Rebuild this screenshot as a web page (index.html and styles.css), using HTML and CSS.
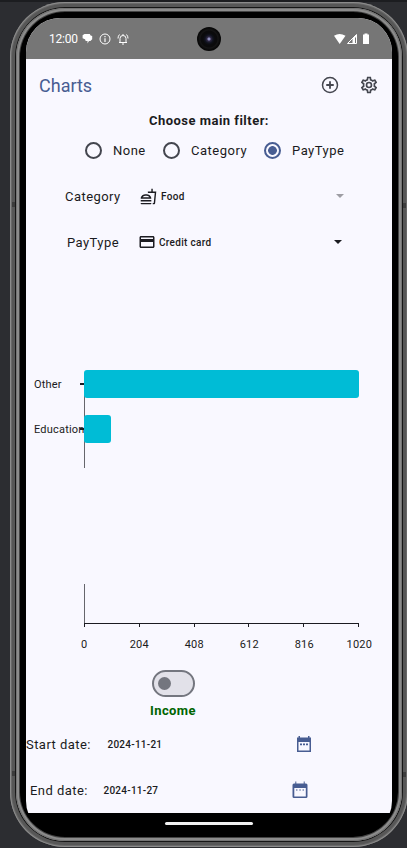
FILE: index.html
```html
<!DOCTYPE html>
<html lang="en">
<head>
<meta charset="utf-8">
<title>Charts</title>
<link rel="stylesheet" href="styles.css">
</head>
<body>
<div class="phone">
  <i class="antenna left upper"></i><i class="antenna left lower"></i>
  <i class="antenna right upper"></i><i class="antenna right lower"></i>
  <div class="ring"><div class="bezel">
  <div class="screen">
    <header class="status">
      <span class="clock">12:00</span>
      <svg class="s-chat" width="11" height="11" viewBox="0 0 11 11"><path d="M2.500 1h5.300l.8 1.500 1.600.4v3.300L8.400 8H7L5.500 10.500V8H3.700L3 6.300.6 5.300V2.300z" fill="#fff"/></svg>
      <svg class="s-info" width="12" height="12" viewBox="0 0 12 12"><circle cx="6" cy="6" r="5" fill="none" stroke="#fff"/><path d="M6 5.300V9M6 3v1.300" stroke="#fff" stroke-width="1.200"/></svg>
      <svg class="s-bell" width="12" height="12" viewBox="0 0 12 12"><path d="M2 9.500h8M3 9V5.500a3 3 0 0 1 6 0V9M6 1v1.500M5 11h2M1 5.500Q1 3 2.500 1.500M11 5.500Q11 3 9.500 1.500" fill="none" stroke="#fff"/></svg>
      <span class="camera"></span>
      <svg class="s-net" width="36" height="12" viewBox="0 0 36 12"><path d="M0 2.800Q5.500-1 11.500 2.800L5.700 11z" fill="#fff"/><path d="M22.500 1.500v9h-9z" fill="none" stroke="#fff"/><path d="M18.500 5.500l4-4v3h-1.500v6h-2.500z" fill="#fff"/><path d="M29 1.500h1.500V.5h3v1H35V11h-6z" fill="#fff"/></svg>
    </header>
    <nav class="appbar">
      <h1>Charts</h1>
      <svg width="18" height="18" viewBox="0 0 24 24"><circle cx="12" cy="12" r="10" fill="none" stroke="#44464f" stroke-width="2"/><path d="M12 7v10M7 12h10" stroke="#44464f" stroke-width="2.400"/></svg>
      <svg class="gear" width="20" height="20" viewBox="0 0 24 24"><path fill="#44464f" d="M19.430 12.980c.04-.32.070-.64.070-.98s-.03-.66-.07-.98l2.110-1.650c.19-.15.240-.42.120-.64l-2-3.460c-.09-.16-.26-.25-.44-.25-.06 0-.12.010-.17.030l-2.490 1c-.52-.4-1.080-.73-1.690-.98l-.38-2.650C14.460 2.180 14.250 2 14 2h-4c-.25 0-.46.180-.49.420l-.38 2.650c-.61.250-1.170.59-1.690.98l-2.490-1c-.06-.02-.12-.03-.18-.03-.17 0-.34.090-.43.250l-2 3.460c-.13.220-.07.490.12.640l2.110 1.650c-.04.32-.07.65-.07.980s.03.66.070.98l-2.110 1.650c-.19.150-.24.42-.12.640l2 3.460c.09.160.26.250.44.250.06 0 .12-.01.170-.03l2.490-1c.52.400 1.080.73 1.690.98l.38 2.650c.03.24.24.42.49.42h4c.25 0 .46-.18.49-.42l.38-2.650c.61-.25 1.170-.59 1.690-.98l2.490 1c.06.020.12.030.18.030.17 0 .34-.09.43-.25l2-3.460c.12-.22.070-.49-.12-.64zm-1.980-1.710c.04.31.050.52.050.73s-.02.43-.05.730l-.14 1.130.89.700 1.080.84-.7 1.210-1.270-.51-1.040-.42-.9.680c-.43.32-.84.56-1.250.73l-1.060.43-.16 1.130-.2 1.350h-1.400l-.19-1.350-.16-1.130-1.060-.43c-.43-.18-.83-.41-1.230-.71l-.91-.7-1.060.43-1.270.51-.7-1.210 1.080-.84.89-.7-.14-1.130c-.03-.31-.05-.54-.05-.74s.02-.43.050-.73l.14-1.130-.89-.7-1.080-.84.7-1.210 1.270.51 1.040.42.9-.68c.43-.32.84-.56 1.250-.73l1.060-.43.160-1.130.2-1.350h1.390l.19 1.350.16 1.130 1.060.43c.43.180.83.410 1.230.71l.91.700 1.060-.43 1.270-.51.7 1.210-1.070.85-.89.700zM12 8a4 4 0 1 0 0 8 4 4 0 0 0 0-8zm0 6a2 2 0 1 1 0-4 2 2 0 0 1 0 4z"/></svg>
    </nav>
    <h2>Choose main filter:</h2>
    <div class="radios">
      <i class="radio"></i><span>None</span>
      <i class="radio"></i><span>Category</span>
      <i class="radio on"></i><span>PayType</span>
    </div>
    <div class="select category">
      <span class="name">Category</span>
      <svg width="17" height="17" viewBox="0 0 24 24"><path fill="#1b1b21" d="M1 21.980c0 .56.450 1.020 1.010 1.020H15c.56 0 1.010-.45 1.010-1.010V21H1zM8.500 8.990C4.750 8.990 1 11 1 15h15c0-4-3.750-6.010-7.500-6.010zM3.620 13c1.110-1.550 3.470-2.010 4.880-2.010s3.770.46 4.880 2.010zM1 17h15v2H1zM18 5V1h-2v4h-5l.23 2h9.560l-1.400 14H18v2h1.720c.84 0 1.530-.65 1.630-1.470L23 5z"/></svg>
      <span class="value">Food</span><i class="caret"></i>
    </div>
    <div class="select paytype">
      <span class="name">PayType</span>
      <svg width="18" height="18" viewBox="0 0 24 24"><path fill="#1b1b21" d="M20 4H4c-1.110 0-1.990.89-1.990 2L2 18c0 1.110.89 2 2 2h16c1.110 0 2-.89 2-2V6c0-1.110-.89-2-2-2zm0 14H4v-6h16zm0-10H4V6h16z"/></svg>
      <span class="value">Credit card</span><i class="caret"></i>
    </div>
    <section class="chart">
      <div class="bars">
        <div class="bar-row"><span>Other</span><i class="mark"></i><b class="bar full"></b></div>
        <div class="bar-row"><span>Education</span><i class="mark"></i><b class="bar small"></b></div>
      </div>
      <div class="axis"><i></i><i></i><i></i><i></i><i></i><i></i></div>
      <div class="ticks"><span>0</span><span>204</span><span>408</span><span>612</span><span>816</span><span>1020</span></div>
    </section>
    <div class="switch"><i></i></div>
    <div class="income">Income</div>
    <div class="date start">
      <span class="name">Start date:</span><span class="value">2024-11-21</span>
      <svg width="18" height="18" viewBox="0 0 18 18"><path fill="#485d92" d="M3.500 1H5v1.500h8V1h1.500v1.500H16V17H2V2.500h1.500zM3.500 7v8.500h11V7z"/><path fill="#485d92" d="M5 8.500h2v1.800H5zM8 8.500h2v1.800H8zM11 8.500h2v1.800h-2z"/></svg>
    </div>
    <div class="date end">
      <span class="name">End date:</span><span class="value">2024-11-27</span>
      <svg width="18" height="18" viewBox="0 0 18 18"><path fill="#485d92" d="M4.300.5h1v2h7.400v-2h1v2H15q1.500 0 1.500 1.500v11.500Q16.500 17 15 17H3q-1.500 0-1.500-1.500V4Q1.500 2.500 3 2.500h1.300zM3.300 7v8.400h11.500V7z"/><path fill="#485d92" d="M5 8.500h1.500v1H5zM8.300 8.500h1.500v1H8.300zM11.500 8.500H13v1h-1.500z"/></svg>
    </div>
    <footer><i></i></footer>
  </div>
  </div></div>
</div>
</body>
</html>
```
FILE: styles.css
```css
* { box-sizing: border-box; }
html, body { margin: 0; height: 848px; overflow: hidden; }
body {
  background: #2c2d31;
  border-top: 2px solid #1c1d20;
  color: #1b1b21;
  font-family: Roboto, sans-serif;
  font-size: 13px;
}
svg { display: block; flex: none; }
i { display: block; flex: none; }
.phone {
  position: relative;
  width: 398px;
  height: 845px;
  margin-left: 10px;
  padding: 5px;
  border-radius: 55px;
  background: #575757;
  box-shadow: inset 0 0 0 1px #8b8b8b, inset 0 0 0 2px #696969;
}
.ring {
  height: 835px;
  padding: 1px;
  border-radius: 50px;
  background: #161616;
}
.bezel {
  height: 833px;
  padding: 10px;
  border-radius: 49px;
  background: #000;
  box-shadow: inset 0 0 0 1px #747474, inset 0 0 0 3px #8c8c8c, inset 0 0 0 4px #444;
}
.antenna { position: absolute; width: 3px; height: 5px; background: #3c3c3c; }
.left { left: 2px; }
.right { right: 2px; }
.upper { top: 200px; }
.lower { top: 769px; }
.right.upper { top: 201px; }
.right.lower { top: 770px; }
.screen {
  width: 366px;
  height: 817px;
  overflow: hidden;
  border-radius: 34px;
  background: linear-gradient(#f9f8ff 795px, #000 795px);
}
.status {
  display: flex;
  align-items: center;
  height: 41px;
  padding-left: 23px;
  background: #767676;
}
.clock { width: 33px; color: #fff; font-size: 12px; letter-spacing: -.2px; white-space: nowrap; }
.s-info { margin-left: 6px; }
.s-bell { margin-left: 6px; }
.camera {
  width: 24px;
  height: 24px;
  margin-left: 68px;
  border-radius: 50%;
  background: radial-gradient(circle at 12px 12px, #8f90bd 0 1px, #332c48 2px, #10131e 4px, #0b0b0c 6px 8px, #151515 9px, #080808 11px);
}
.s-net { margin-left: 113px; }
.appbar { display: flex; align-items: center; height: 52px; padding-left: 13px; }
h1 { width: 282px; margin: 0; color: #485d92; font-size: 18px; font-weight: 400; }
.gear { margin-left: 20px; }
h2 { margin: 2px 0 0; height: 16px; font-size: 13px; line-height: 16px; font-weight: 700; letter-spacing: .48px; text-align: center; }
.radios {
  display: grid;
  grid-template-columns: 28px 50px 28px 73px 28px 70px;
  align-items: center;
  height: 42px;
  padding-left: 59px;
  letter-spacing: .5px;
}
.radio { width: 17px; height: 17px; border: 2px solid #44464f; border-radius: 50%; }
.radio.on { border-color: #485d92; background: radial-gradient(circle, #485d92 0 4px, transparent 4.700px); }
.select { display: flex; align-items: center; height: 46px; }
.category { padding-left: 39px; margin-top: 2px; }
.paytype { padding-left: 41px; }
.name { letter-spacing: .45px; white-space: nowrap; }
.select .name { width: 75px; }
.paytype .name { width: 71px; }
.value { font-size: 10px; font-weight: 500; letter-spacing: .3px; white-space: nowrap; }
.select .value { width: 175px; margin-left: 4px; }
.paytype .value { width: 175px; margin-left: 3px; }
.caret { border: 4px solid transparent; border-top-color: #1b1b21; border-bottom: 0; }
.category .caret { border-top-color: #9e9da4; }
.chart { height: 405px; padding: 105px 0 0 8px; font-size: 11px; }
.bars {
  height: 98px;
  background: linear-gradient(#66666c, #66666c) 50px 14px / 1px 84px no-repeat;
}
.bar-row { display: flex; align-items: center; height: 28px; margin-bottom: 17px; letter-spacing: .2px; }
.bar-row span { width: 46px; white-space: nowrap; }
.mark { width: 4px; height: 2px; background: #1b1b21; }
.bar { position: relative; height: 28px; border-radius: 3px; background: #00bcd6; }
.full { width: 275px; }
.small { width: 27px; }
.axis {
  display: flex;
  justify-content: space-between;
  align-items: flex-end;
  width: 275px;
  height: 43px;
  margin: 116px 0 0 50px;
  background: linear-gradient(#66666c, #66666c) 0 0 / 1px 39px no-repeat, linear-gradient(#1b1b21, #1b1b21) 0 39px / 100% 1px no-repeat;
}
.axis i { width: 1px; height: 4px; background: #1b1b21; }
.ticks { display: flex; justify-content: space-between; width: 315px; margin: 11px 0 0 30.300px; line-height: 13px; letter-spacing: .2px; }
.ticks span { width: 40px; text-align: center; }
.switch { width: 43px; height: 27px; margin: 0 0 0 126px; padding: 5px; border: 2px solid #74767f; border-radius: 14px; background: #e2e1e9; }
.switch i { width: 13px; height: 13px; border-radius: 50%; background: #74767f; margin-left: -1px; }
.income { margin: 6px 0 0 124px; color: #006400; font-weight: 700; line-height: 16px; letter-spacing: .4px; }
.date { display: flex; align-items: center; height: 46px; }
.start { margin-top: 2px; }
.date .name { width: 81.500px; }
.date .value { width: 187.500px; letter-spacing: .25px; }
.end { padding-left: 4px; }
.end .name { width: 73.500px; }
footer { display: flex; justify-content: center; height: 60px; padding-top: 9px; background: #000; }
footer i { width: 88px; height: 3px; border-radius: 2px; background: #f1f1f1; }
```
